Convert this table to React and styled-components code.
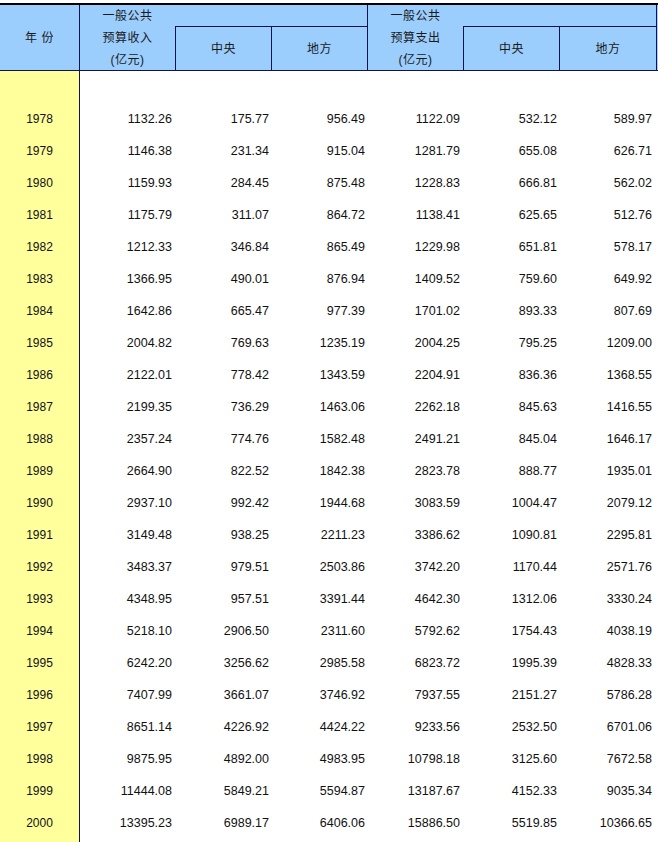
import React from "react";
import styled, { createGlobalStyle } from "styled-components";

const Global = createGlobalStyle`
  html, body {
    margin: 0;
    padding: 0;
    background: #ffffff;
  }
  body {
    font-family: "Liberation Sans", "Noto Sans CJK SC", sans-serif;
    font-size: 12px;
    color: #111;
  }
`;

const line = "#12134a";
const cols = "80px 95px 97px 96px 95px 97px 97px 1fr";

const Sheet = styled.div`
  margin-top: 3px;
  width: 658px;
  border-top: 2px solid #000;
  overflow: hidden;
`;

const Header = styled.div`
  display: grid;
  grid-template-columns: ${cols};
  grid-template-rows: 22px 44px;
  background: #9bcdfd;
`;

const HeadCell = styled.div`
  box-sizing: border-box;
  grid-column: ${(p) => p.$col};
  grid-row: ${(p) => p.$row};
  display: flex;
  flex-direction: column;
  align-items: center;
  justify-content: center;
  line-height: 22px;
  letter-spacing: 0.5px;
  color: #1a1a1a;
  border-bottom: 1px solid ${line};
  border-left: ${(p) => (p.$left ? `1px solid ${line}` : "none")};
  border-right: ${(p) => (p.$right ? `1px solid ${line}` : "none")};
`;

const Body = styled.div`
  display: grid;
  grid-template-columns: ${cols};
  grid-auto-rows: 32px;
  font-size: 12.5px;
`;

const YearCell = styled.div`
  box-sizing: border-box;
  background: #ffff9c;
  border-right: 1px solid ${line};
  line-height: 32px;
  font-size: 12px;
  text-align: center;
`;

const NumCell = styled.div`
  box-sizing: border-box;
  line-height: 32px;
  text-align: right;
  padding-right: ${(p) => (p.$last ? "5px" : "3px")};
`;

const rows = [
  ["1978", "1132.26", "175.77", "956.49", "1122.09", "532.12", "589.97"],
  ["1979", "1146.38", "231.34", "915.04", "1281.79", "655.08", "626.71"],
  ["1980", "1159.93", "284.45", "875.48", "1228.83", "666.81", "562.02"],
  ["1981", "1175.79", "311.07", "864.72", "1138.41", "625.65", "512.76"],
  ["1982", "1212.33", "346.84", "865.49", "1229.98", "651.81", "578.17"],
  ["1983", "1366.95", "490.01", "876.94", "1409.52", "759.60", "649.92"],
  ["1984", "1642.86", "665.47", "977.39", "1701.02", "893.33", "807.69"],
  ["1985", "2004.82", "769.63", "1235.19", "2004.25", "795.25", "1209.00"],
  ["1986", "2122.01", "778.42", "1343.59", "2204.91", "836.36", "1368.55"],
  ["1987", "2199.35", "736.29", "1463.06", "2262.18", "845.63", "1416.55"],
  ["1988", "2357.24", "774.76", "1582.48", "2491.21", "845.04", "1646.17"],
  ["1989", "2664.90", "822.52", "1842.38", "2823.78", "888.77", "1935.01"],
  ["1990", "2937.10", "992.42", "1944.68", "3083.59", "1004.47", "2079.12"],
  ["1991", "3149.48", "938.25", "2211.23", "3386.62", "1090.81", "2295.81"],
  ["1992", "3483.37", "979.51", "2503.86", "3742.20", "1170.44", "2571.76"],
  ["1993", "4348.95", "957.51", "3391.44", "4642.30", "1312.06", "3330.24"],
  ["1994", "5218.10", "2906.50", "2311.60", "5792.62", "1754.43", "4038.19"],
  ["1995", "6242.20", "3256.62", "2985.58", "6823.72", "1995.39", "4828.33"],
  ["1996", "7407.99", "3661.07", "3746.92", "7937.55", "2151.27", "5786.28"],
  ["1997", "8651.14", "4226.92", "4424.22", "9233.56", "2532.50", "6701.06"],
  ["1998", "9875.95", "4892.00", "4983.95", "10798.18", "3125.60", "7672.58"],
  ["1999", "11444.08", "5849.21", "5594.87", "13187.67", "4152.33", "9035.34"],
  ["2000", "13395.23", "6989.17", "6406.06", "15886.50", "5519.85", "10366.65"],
];

const DataRow = ({ cells }) => (
  <>
    <YearCell>{cells[0]}</YearCell>
    {cells.slice(1).map((v, i) => (
      <NumCell key={i} $last={i === 5}>{v}</NumCell>
    ))}
    <NumCell />
  </>
);

const blank = ["", "", "", "", "", "", ""];

const App = () => {
  return (
    <>
      <Global />
      <Sheet>
        <Header>
          <HeadCell $col="1" $row="1 / 3" $right>年 份</HeadCell>
          <HeadCell $col="2" $row="1 / 3">
            <span>一般公共</span>
            <span>预算收入</span>
            <span>(亿元)</span>
          </HeadCell>
          <HeadCell $col="3 / 5" $row="1" $right />
          <HeadCell $col="3" $row="2" $left $right>中央</HeadCell>
          <HeadCell $col="4" $row="2" $right>地方</HeadCell>
          <HeadCell $col="5" $row="1 / 3">
            <span>一般公共</span>
            <span>预算支出</span>
            <span>(亿元)</span>
          </HeadCell>
          <HeadCell $col="6 / 8" $row="1" $right />
          <HeadCell $col="6" $row="2" $left $right>中央</HeadCell>
          <HeadCell $col="7" $row="2" $right>地方</HeadCell>
          <HeadCell $col="8" $row="1 / 3" />
        </Header>
        <Body>
          <DataRow cells={blank} />
          {rows.map((r) => (
            <DataRow key={r[0]} cells={r} />
          ))}
          <DataRow cells={blank} />
        </Body>
      </Sheet>
    </>
  );
};

export default App;
